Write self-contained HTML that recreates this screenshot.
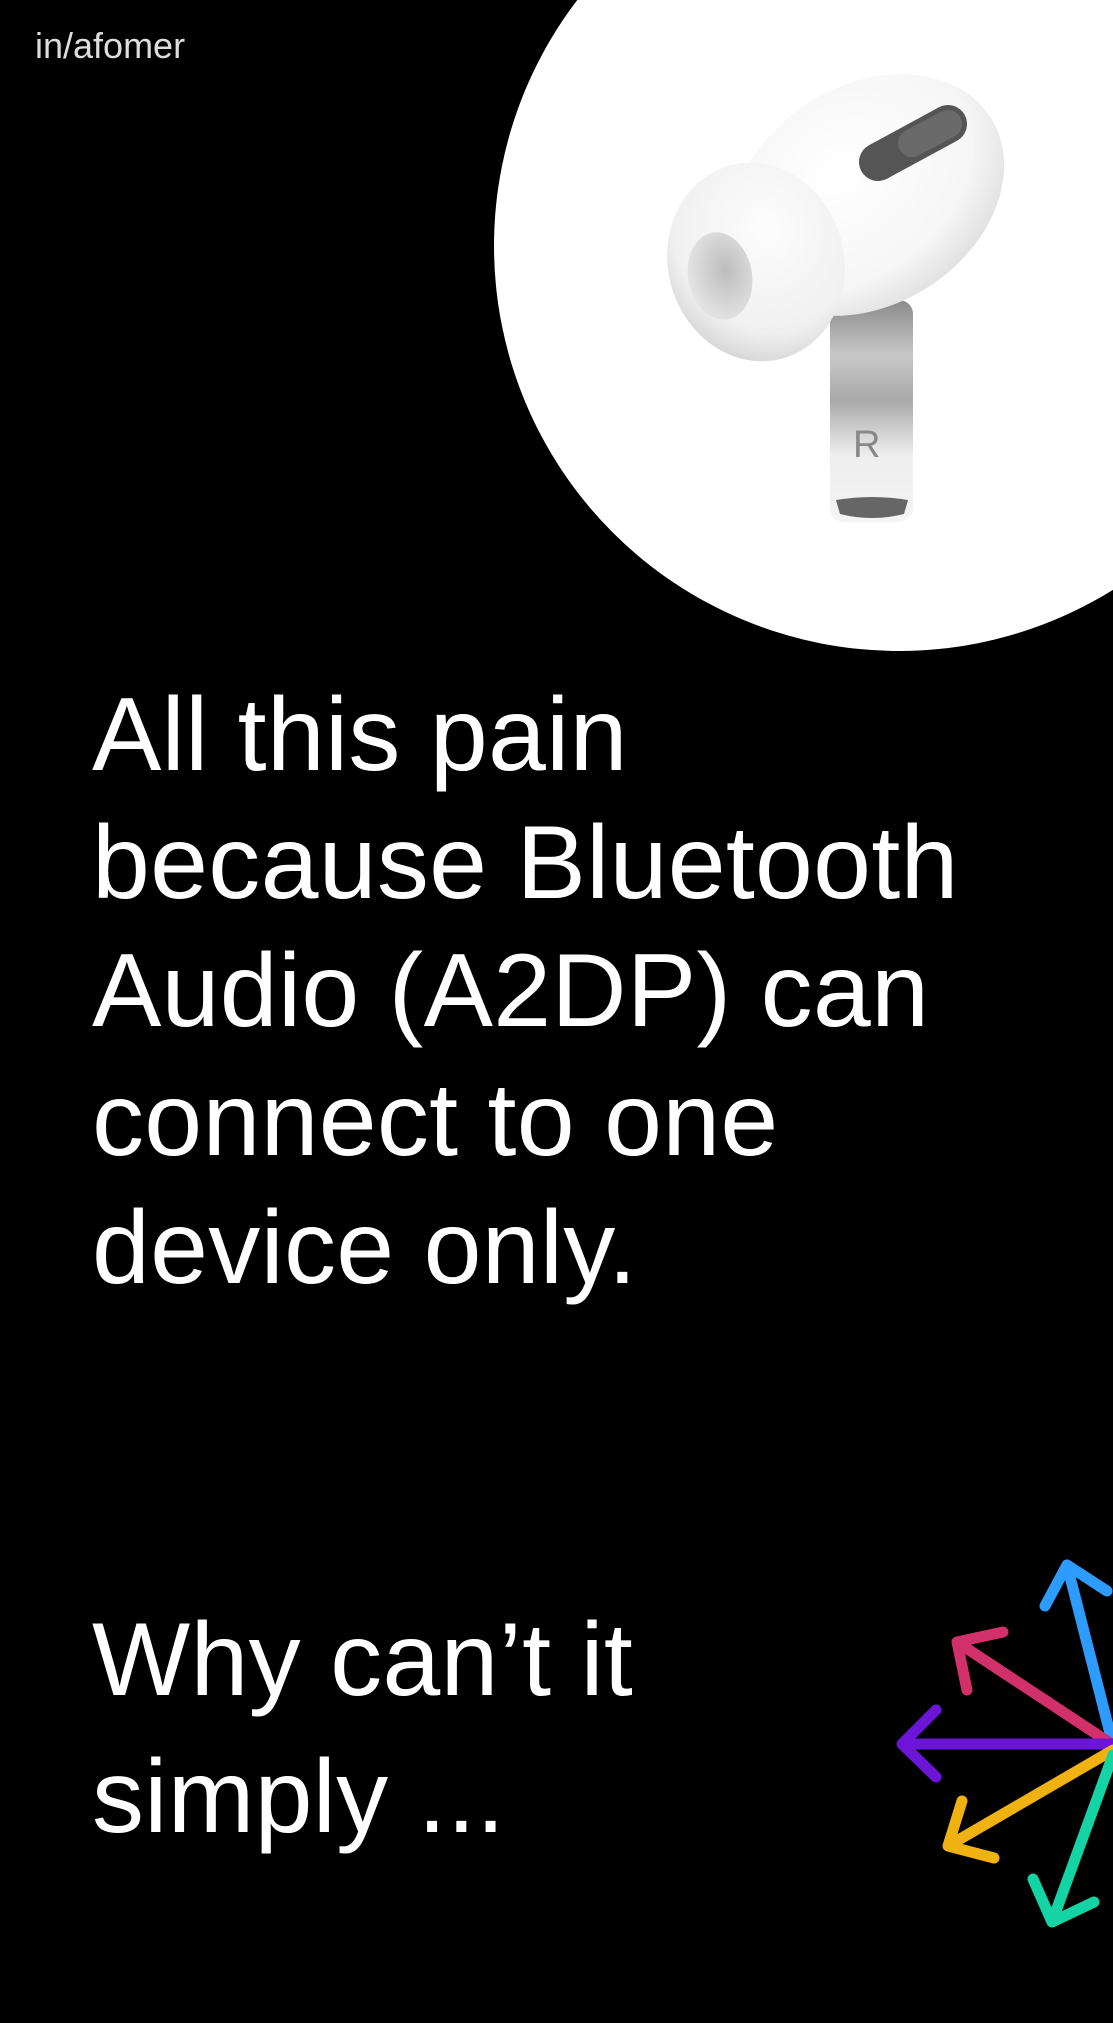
<!DOCTYPE html>
<html><head><meta charset="utf-8"><style>
html,body{margin:0;padding:0;background:#000;}
body{width:1113px;height:2023px;position:relative;overflow:hidden;font-family:"Liberation Sans",sans-serif;color:#fff;}
.t{position:absolute;left:92px;font-size:104px;letter-spacing:0.3px;white-space:nowrap;line-height:1;}
.h{position:absolute;left:35px;top:28px;font-size:36px;color:#ddd;white-space:nowrap;line-height:1;}
svg{position:absolute;left:0;top:0;}
</style></head><body>
<svg width="1113" height="2023" viewBox="0 0 1113 2023">
<defs>
<radialGradient id="bg" cx="0.45" cy="0.35" r="0.7"><stop offset="0" stop-color="#fff"/><stop offset="0.7" stop-color="#f6f6f6"/><stop offset="1" stop-color="#dcdcdc"/></radialGradient>
<radialGradient id="tg" cx="0.6" cy="0.35" r="0.7"><stop offset="0" stop-color="#fdfdfd"/><stop offset="0.75" stop-color="#f0f0f0"/><stop offset="1" stop-color="#d5d5d5"/></radialGradient>
<radialGradient id="hg" cx="0.6" cy="0.45" r="0.6"><stop offset="0" stop-color="#bdbdbd"/><stop offset="1" stop-color="#e4e4e4"/></radialGradient>
<linearGradient id="sg" x1="0" y1="0" x2="0" y2="1"><stop offset="0" stop-color="#8a8a8a"/><stop offset="0.25" stop-color="#c8c8c8"/><stop offset="0.45" stop-color="#a9a9a9"/><stop offset="0.7" stop-color="#eeeeee"/><stop offset="1" stop-color="#f4f4f4"/></linearGradient>
</defs>
<circle cx="899" cy="246" r="405" fill="#fff"/>
<rect x="830" y="300" width="83" height="222" rx="14" fill="url(#sg)"/>
<path d="M836 500 Q872 494 908 500 L904 514 Q872 522 840 514 Z" fill="#666"/>
<text x="853" y="457" font-family="Liberation Sans,sans-serif" font-size="38" fill="#888">R</text>
<ellipse cx="868" cy="195" rx="145" ry="110" transform="rotate(-32 868 195)" fill="url(#bg)"/>
<line x1="878" y1="162" x2="948" y2="124" stroke="#555" stroke-width="38" stroke-linecap="round"/>
<line x1="912" y1="143" x2="948" y2="124" stroke="#6a6a6a" stroke-width="28" stroke-linecap="round"/>
<ellipse cx="756" cy="262" rx="88" ry="100" transform="rotate(-15 756 262)" fill="url(#tg)"/>
<ellipse cx="720" cy="276" rx="32" ry="44" transform="rotate(-10 720 276)" fill="url(#hg)"/>
<g stroke-width="11" stroke-linecap="round" stroke-linejoin="round" fill="none">
<path d="M1113 1745 L1067 1565 M1045 1606 L1067 1565 L1107 1591" stroke="#2e9bff"/>
<path d="M1113 1745 L957 1642 M967 1690 L957 1642 L1003 1632" stroke="#d1306a"/>
<path d="M1113 1744 L902 1744 M936 1710 L902 1744 L936 1777" stroke="#6b16d6"/>
<path d="M1113 1750 L948 1846 M962 1801 L948 1846 L994 1858" stroke="#efb211"/>
<path d="M1113 1755 L1052 1922 M1033 1879 L1052 1922 L1094 1902" stroke="#14d4a6"/>
</g>
</svg>
<div class="h">in/afomer</div>
<div class="t" style="top:683px">All this pain</div>
<div class="t" style="top:811px">because Bluetooth</div>
<div class="t" style="top:939px">Audio (A2DP) can</div>
<div class="t" style="top:1068px">connect to one</div>
<div class="t" style="top:1196px">device only.</div>
<div class="t" style="top:1608px">Why can’t it</div>
<div class="t" style="top:1745px">simply ...</div>
</body></html>
